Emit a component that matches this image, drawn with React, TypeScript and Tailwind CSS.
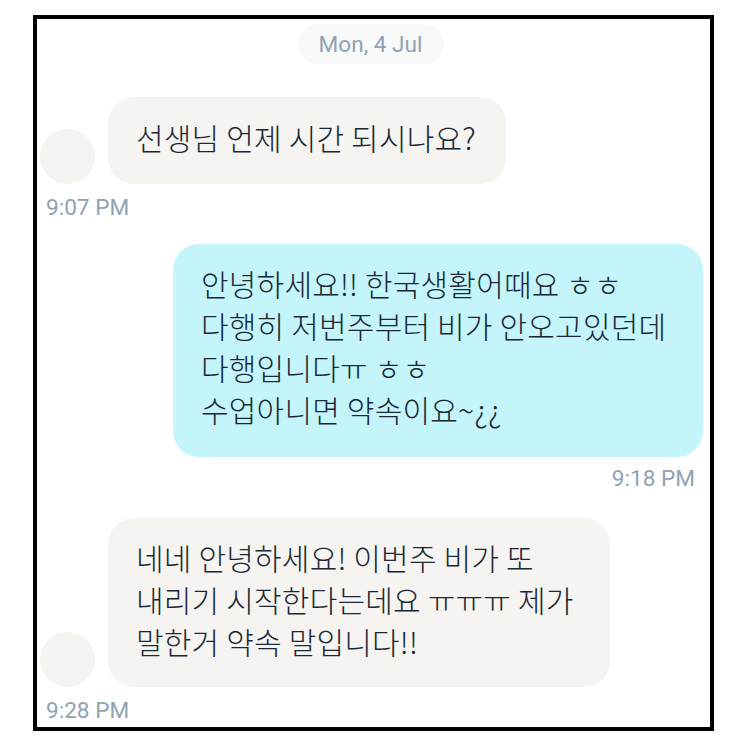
export default function App() {
  const kr = "font-['Noto_Sans_CJK_KR','Noto_Sans',sans-serif] font-light text-[30px] leading-[42px] tracking-[0.2px] text-[#1a2836] whitespace-pre";
  const time = "font-['Roboto',sans-serif] text-[22.6px] leading-[28px] text-[#8fa3b5]";
  return (
    <div className="w-[743px] h-[743px] bg-white pt-[15px] pl-[33px]">
      <div className="w-[681px] h-[716px] border-4 border-black bg-white flex flex-col pt-[5px] pl-[3px] pr-[7px] box-border">
        <div className="flex justify-center pr-[2px]">
          <div className={"h-[40px] w-[146px] rounded-[20px] bg-[#f8f9f9] flex items-center justify-center pt-[2px] " + time}>Mon, 4 Jul</div>
        </div>
        <div className="flex items-end gap-[13px] mt-[33px]">
          <div className="w-[55px] h-[55px] rounded-full bg-[#f5f4f1]" />
          <div className={"h-[87px] w-[398px] rounded-[26px] bg-[#f5f4f1] pl-[28px] pt-[19px] " + kr}>선생님 언제 시간 되시나요?</div>
        </div>
        <div className={"pl-[6px] mt-[10px] " + time}>9:07 PM</div>
        <div className="flex justify-end mt-[22px]">
          <div className={"h-[213px] w-[530px] rounded-[26px] bg-[#c3f5fb] pl-[28px] pt-[18px] " + kr}>
            {"안녕하세요!! 한국생활어때요 ㅎㅎ\n다행히 저번주부터 비가 안오고있던데\n다행입니다ㅠ ㅎㅎ\n수업아니면 약속이요~¿¿"}
          </div>
        </div>
        <div className={"text-right pr-[8px] mt-[8px] " + time}>9:18 PM</div>
        <div className="flex items-end gap-[13px] mt-[25px]">
          <div className="w-[55px] h-[55px] rounded-full bg-[#f5f4f1]" />
          <div className={"h-[169px] w-[502px] rounded-[26px] bg-[#f5f4f1] pl-[28px] pt-[18px] " + kr}>
            {"네네 안녕하세요! 이번주 비가 또\n내리기 시작한다는데요 ㅠㅠㅠ 제가\n말한거 약속 말입니다!!"}
          </div>
        </div>
        <div className={"pl-[6px] mt-[10px] " + time}>9:28 PM</div>
      </div>
    </div>
  );
}
